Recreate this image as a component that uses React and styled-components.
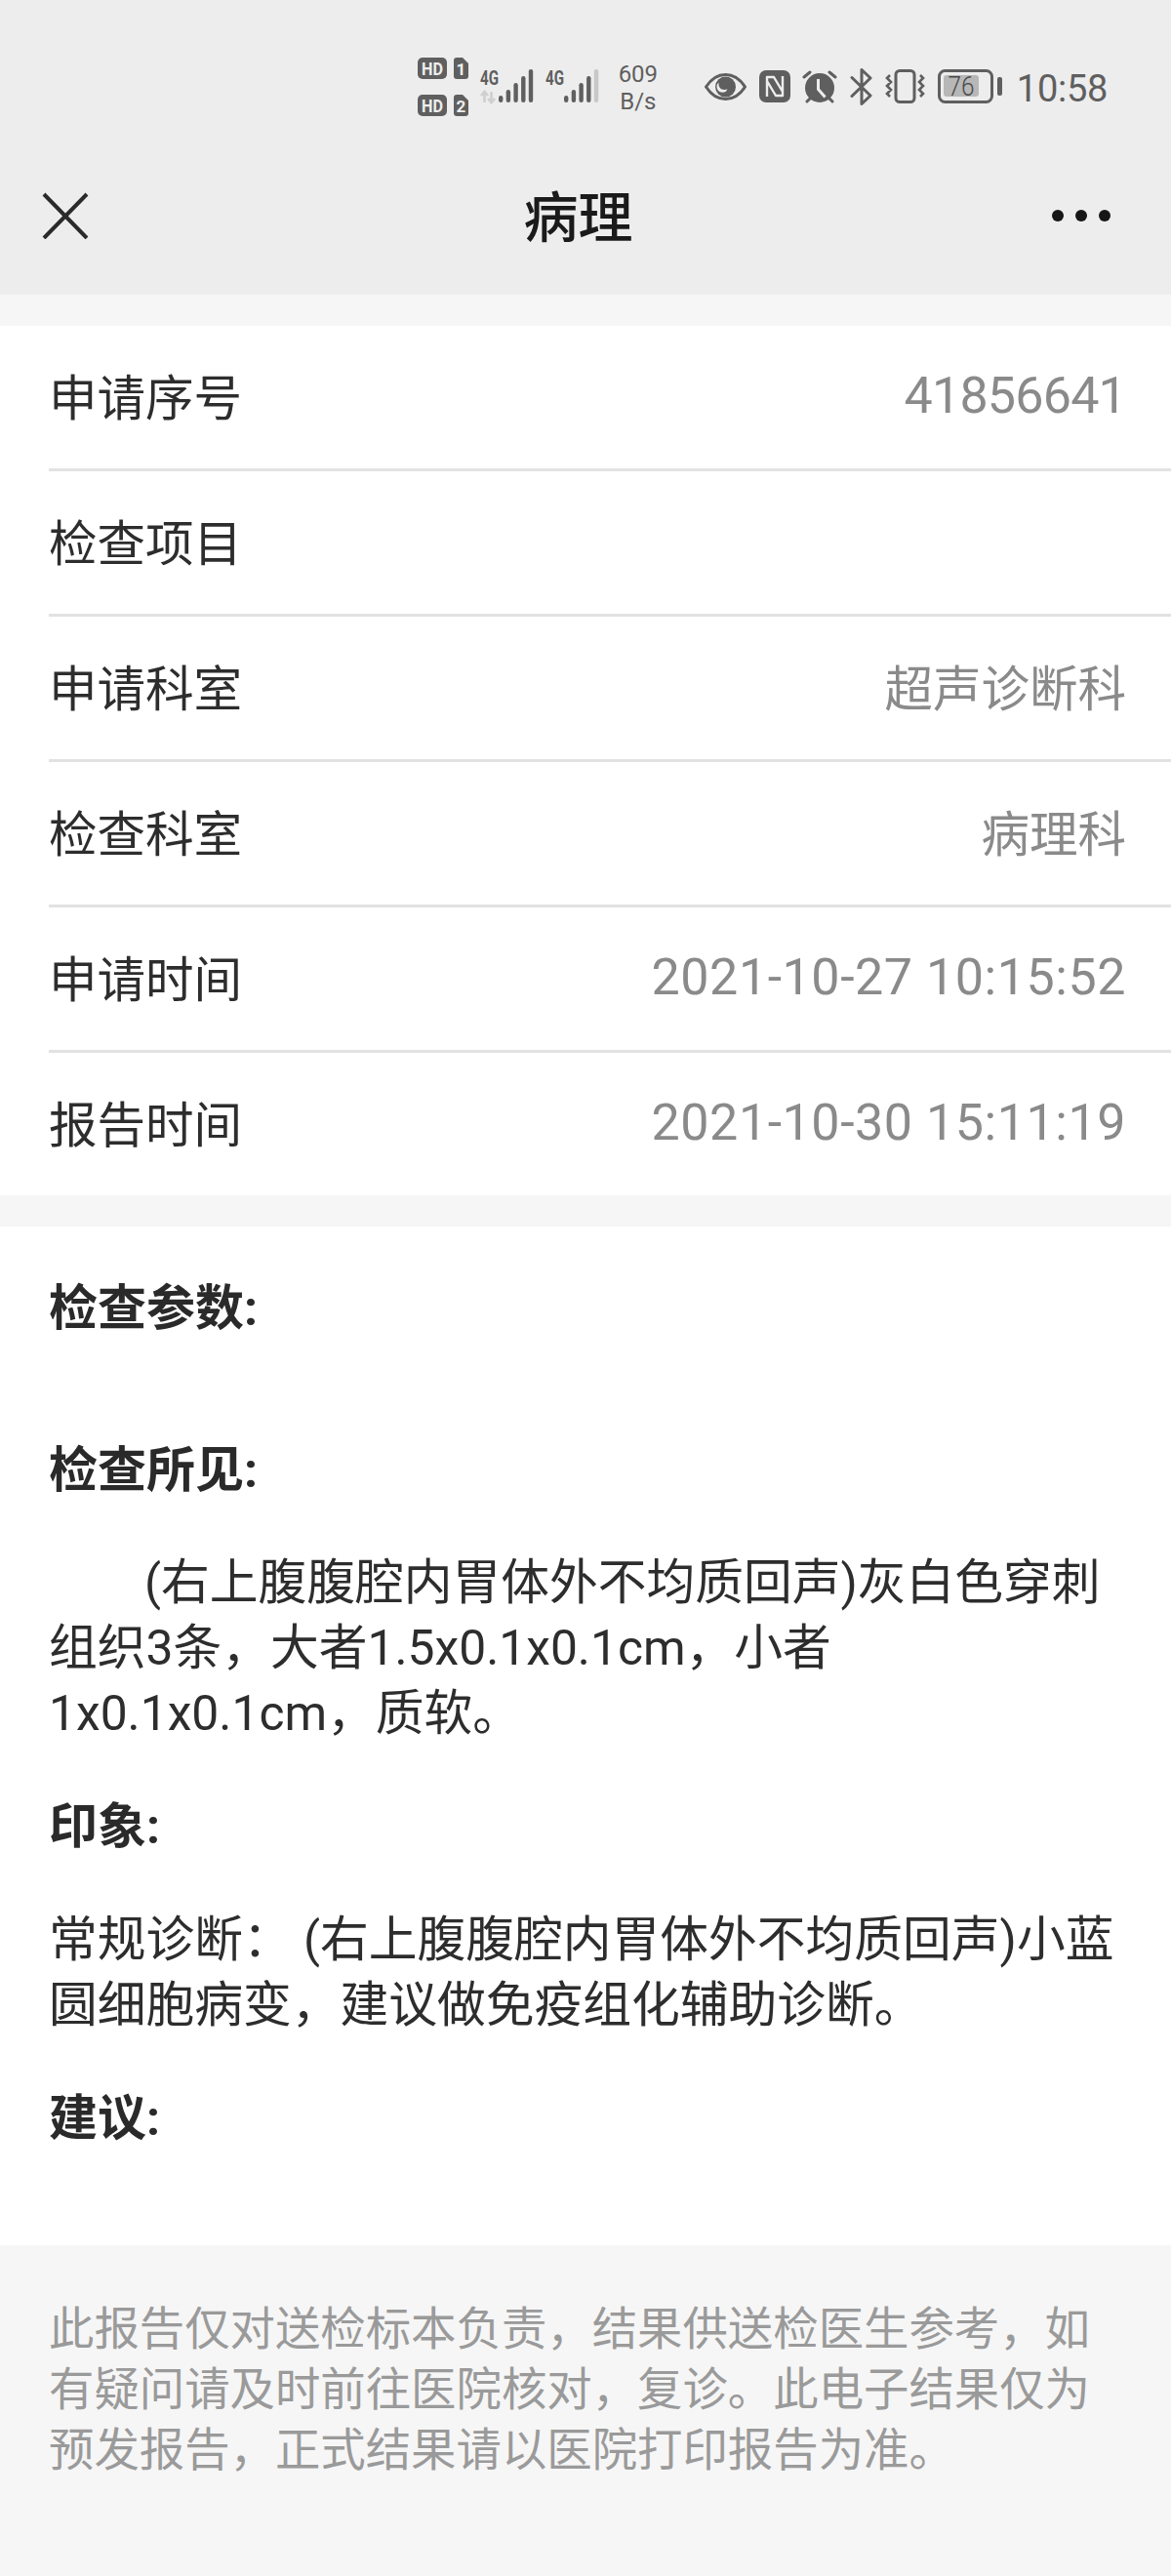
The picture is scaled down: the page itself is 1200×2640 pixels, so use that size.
import React from 'react';
import styled, { createGlobalStyle } from 'styled-components';

const Global = createGlobalStyle`
  html, body { margin: 0; padding: 0; background: #f5f5f5; }
  * { box-sizing: border-box; }
`;
const font = `Roboto, "Noto Sans CJK SC", sans-serif`;
const ink = '#5f5f5f';

const Page = styled.div`
  width: 1200px; height: 2640px; background: #f6f6f6; font-family: ${font}; color: #2c2c2c; overflow: hidden;
`;
const Header = styled.header`
  height: 302px; background: #ededed; display: flex; flex-direction: column;
`;
const StatusBar = styled.div`
  height: 152px; display: flex; align-items: center; justify-content: flex-end; padding: 25px 65px 0 0; color: ${ink};
`;
const NavBar = styled.div`
  height: 150px; padding: 0 62px 12px 43px; display: flex; align-items: center; justify-content: space-between;
`;
const Title = styled.h1`
  margin: 6px 0 0 16px; font-size: 56px; font-weight: 500; color: #1a1a1a; line-height: 1;
`;
const Speed = styled.div`
  font-size: 24px; line-height: 28px; text-align: center; margin: 0 48px 0 19px; width: 41px; white-space: nowrap;
  display: flex; flex-direction: column; align-items: center; padding-top: 2px;
`;
const Clock = styled.span`
  font-size: 38px; margin: 5px 0 0 15px; line-height: 1; letter-spacing: -0.3px;
`;
const Icons = styled.div`display: flex; align-items: center; gap: 12.5px;`;
const IconGroup = styled.div`display: flex; align-items: center; gap: 12px;`;
const Card = styled.section`
  margin-top: 32px; background: #fff;
`;
const Row = styled.div`
  height: 149px; margin-left: 50px; padding: 0 46px 6px 0; display: flex; align-items: center; justify-content: space-between;
  &:not(:last-child) { border-bottom: 3px solid #e2e2e2; }
  &:last-child { height: 146px; }
`;
const Label = styled.span`font-size: 49.5px; color: #2d2d2d;`;
const Value = styled.span`
  font-size: ${p => p.$size}px; color: #8a8a8a; letter-spacing: ${p => p.$spacing}px; line-height: 60px;
  margin-top: ${p => p.$drop}px;
`;
const Report = styled.section`
  margin-top: 32px; background: #fff; height: 1044px; padding: 51px 50px 0;
`;
const Heading = styled.h2`
  margin: 0 0 ${p => p.$gap}px; font-size: 50px; font-weight: 700; line-height: 67px; color: #2a2a2a;
`;
const Para = styled.p`
  margin: 0 0 49px; font-size: 49.75px; line-height: 67px; color: #2d2d2d;
  text-indent: ${p => p.$indent || 0}px;
`;
const Footer = styled.footer`
  padding: 55px 50px 0; font-size: 46.4px; line-height: 62px; color: #9a9a9a;
`;
const Glyph = styled.svg`display: block;`;

const rows = [
  ['申请序号', '41856641', 52, -0.8, 4],
  ['检查项目', '', 49.5, 0, 0],
  ['申请科室', '超声诊断科', 49.5, 0, 10],
  ['检查科室', '病理科', 49.5, 0, 10],
  ['申请时间', '2021-10-27 10:15:52', 52, 0.55, 4],
  ['报告时间', '2021-10-30 15:11:19', 52, 0.55, 4],
];

const HdBadges = () => (
  <Glyph width="52" height="60" viewBox="0 0 52 60">
    {[0, 38].map((y, i) => (
      <g key={y}>
        <rect x="0" y={y} width="30" height="22" rx="5" fill={ink} />
        <text x="15" y={y + 17.5} textAnchor="middle" fontSize="18" fontWeight="700" fill="#ededed" fontFamily="Roboto" textLength="22" lengthAdjust="spacingAndGlyphs">HD</text>
        <path d={`M37 ${y + 3}a3 3 0 0 1 3-3h6l6 6v13a3 3 0 0 1-3 3h-9a3 3 0 0 1-3-3z`} fill={ink} />
        <text x="44.5" y={y + 18} textAnchor="middle" fontSize="17" fontWeight="700" fill="#ededed" fontFamily="Roboto">{i + 1}</text>
      </g>
    ))}
  </Glyph>
);

const bars = [27, 21, 14, 7, 0];
const Signal = ({ arrows, last }) => (
  <Glyph width="55" height="44" viewBox="0 -4 55 44">
    <text x="0" y="16" fontSize="21" fontWeight="700" fill={ink} fontFamily="Roboto" textLength="19" lengthAdjust="spacingAndGlyphs">4G</text>
    {arrows && <path d="M4.5 34V23M1 27l3.5-4 3.5 4M11.5 23v11M8 30l3.5 4 3.5-4" stroke="#cfcfcf" strokeWidth="2.6" fill="none" />}
    {bars.map((y, i) => (
      <rect
        key={y}
        x={19 + i * 7.7}
        y={y}
        width="4.4"
        height={34 - y}
        rx="2.2"
        fill={last && i === 4 ? '#c8c8c8' : ink}
      />
    ))}
  </Glyph>
);

const Eye = () => (
  <Glyph width="43" height="28" viewBox="0 0 43 28">
    <path d="M1.500 14C7 5.500 13.500 1.500 21.500 1.500S36 5.500 41.500 14C36 22.500 29.500 26.500 21.500 26.500S7 22.500 1.500 14z" fill="none" stroke={ink} strokeWidth="3" strokeLinejoin="round" />
    <circle cx="21.500" cy="14" r="10.500" fill={ink} />
    <path d="M14.500 9.500c-.5 4 1.500 7.500 6 7.500 1.200 0 2.200-.3 3-.8-.8 2.300-2.800 3.600-5 3.600-3.500 0-6-3-6-6 0-1.700.7-3.200 2-4.300z" fill="#ededed" />
  </Glyph>
);
const Nfc = () => (
  <Glyph width="32" height="33" viewBox="0 0 32 33">
    <rect x="0" y="0" width="32" height="33" rx="7" fill={ink} />
    <path d="M8 27V7h7l9 15M24 6v20h-7L8 11" fill="none" stroke="#ededed" strokeWidth="2.4" strokeLinejoin="round" />
  </Glyph>
);
const Alarm = () => (
  <Glyph width="36" height="34" viewBox="0 0 36 34">
    <circle cx="18" cy="18" r="15" fill={ink} />
    <path d="M16.500 9v10.500l7 8" fill="none" stroke="#ededed" strokeWidth="3" />
    <path d="M2 7l6-5M34 7l-6-5M5 32l3-3M31 32l-3-3" stroke={ink} strokeWidth="3" strokeLinecap="round" />
  </Glyph>
);
const Bluetooth = () => (
  <Glyph width="24" height="38" viewBox="0 0 24 38">
    <path d="M2 28.500L21 10 12 1.500v35l9-8.500L2 9.500" fill="none" stroke={ink} strokeWidth="3" strokeLinecap="round" strokeLinejoin="round" />
  </Glyph>
);
const Vibrate = () => (
  <Glyph width="41" height="35" viewBox="0 0 41 35">
    <rect x="11" y="1.500" width="19" height="32" rx="4" fill="none" stroke={ink} strokeWidth="3" />
    <path d="M5 6L2 9l4 4-4 4 4 4-4 4 3 3M36 6l3 3-4 4 4 4-4 4 4 4-3 3" fill="none" stroke={ink} strokeWidth="2.6" />
  </Glyph>
);
const Battery = () => (
  <Glyph width="66" height="35" viewBox="0 0 66 35">
    <rect x="1.500" y="1.500" width="54" height="32" rx="6" fill="none" stroke={ink} strokeWidth="3" />
    <rect x="6" y="6" width="36" height="22" rx="3" fill="#b7b7b7" />
    <rect x="61" y="8" width="5" height="19" rx="2" fill={ink} />
    <text x="24" y="27" textAnchor="middle" fontSize="28" fill="#4a4a4a" fontFamily="Roboto" fontWeight="300" textLength="27" lengthAdjust="spacingAndGlyphs">76</text>
  </Glyph>
);
const Close = () => (
  <Glyph width="48" height="48" viewBox="0 0 48 48">
    <path d="M2 2l44 45M46 2L2 47" stroke="#2a2a2a" strokeWidth="4" />
  </Glyph>
);
const More = () => (
  <Glyph width="60" height="12" viewBox="0 0 60 12">
    <circle cx="6" cy="6" r="6" fill="#161616" />
    <circle cx="30" cy="6" r="6" fill="#161616" />
    <circle cx="54" cy="6" r="6" fill="#161616" />
  </Glyph>
);

export default function App() {
  return (
    <Page>
      <Global />
      <Header>
        <StatusBar>
          <IconGroup>
            <HdBadges />
            <Signal arrows />
            <Signal last />
          </IconGroup>
          <Speed><span>609</span><span>B/s</span></Speed>
          <Icons>
            <Eye /><Nfc /><Alarm /><Bluetooth /><Vibrate /><Battery />
          </Icons>
          <Clock>10:58</Clock>
        </StatusBar>
        <NavBar>
          <Close />
          <Title>病理</Title>
          <More />
        </NavBar>
      </Header>
      <Card>
        {rows.map(([k, v, size, spacing, drop]) => (
          <Row key={k}><Label>{k}</Label><Value $size={size} $spacing={spacing} $drop={drop}>{v}</Value></Row>
        ))}
      </Card>
      <Report>
        <Heading $gap={99}>检查参数:</Heading>
        <Heading $gap={48}>检查所见:</Heading>
        <Para $indent={98}>(右上腹腹腔内胃体外不均质回声)灰白色穿刺组织3条，大者1.5x0.1x0.1cm，小者<br />1x0.1x0.1cm，质软。</Para>
        <Heading $gap={49}>印象:</Heading>
        <Para>常规诊断： (右上腹腹腔内胃体外不均质回声)小蓝圆细胞病变，建议做免疫组化辅助诊断。</Para>
        <Heading $gap={0}>建议:</Heading>
      </Report>
      <Footer>此报告仅对送检标本负责，结果供送检医生参考，如有疑问请及时前往医院核对，复诊。此电子结果仅为预发报告，正式结果请以医院打印报告为准。</Footer>
    </Page>
  );
}
